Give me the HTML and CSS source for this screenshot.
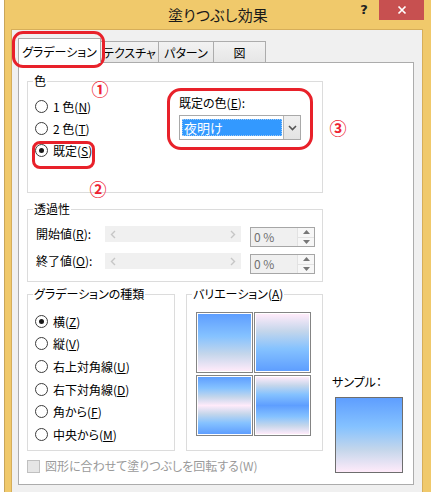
FILE: index.html
```html
<!DOCTYPE html>
<html lang="ja">
<head>
<meta charset="utf-8">
<title>塗りつぶし効果</title>
<link rel="stylesheet" href="styles.css">
</head>
<body>
<div class="window">
  <div class="titlebar">
    <div class="tb-side"></div>
    <div class="title">塗りつぶし効果</div>
    <div class="tb-side tb-buttons">
      <div class="help">?</div>
      <div class="close"><svg width="10" height="10" viewBox="0 0 10 10"><path d="M1.5 1.5L8.5 8.5M8.5 1.5L1.5 8.5" stroke="#fff" stroke-width="1.7"/></svg></div>
    </div>
  </div>
  <div class="client">
    <div class="tabs">
      <div class="tab active">グラデーション</div>
      <div class="tab t2">テクスチャ</div>
      <div class="tab t3">パターン</div>
      <div class="tab t4">図</div>
    </div>
    <div class="panel">
      <div class="grp grp-color">
        <div class="legend">色</div>
        <div class="color-body">
          <div class="radios">
            <div class="radio"><span class="rb"></span>1 色(<u>N</u>)</div>
            <div class="radio"><span class="rb"></span>2 色(<u>T</u>)</div>
            <div class="radio"><span class="rb on"></span>既定(<u>S</u>)</div>
          </div>
          <div class="preset">
            <div class="preset-label">既定の色(<u>E</u>):</div>
            <div class="combo">
              <div class="combo-val">夜明け</div>
              <div class="combo-btn"><svg width="9" height="6" viewBox="0 0 9 6"><path d="M1 1L4.5 4.5L8 1" fill="none" stroke="#555" stroke-width="1.6"/></svg></div>
            </div>
          </div>
        </div>
      </div>

      <div class="grp grp-trans">
        <div class="legend">透過性</div>
        <div class="trows">
          <div class="trow">
            <div class="tlabel">開始値(<u>R</u>):</div>
            <div class="slider">
              <svg width="6" height="9" viewBox="0 0 6 9"><path d="M5 1L1.5 4.5L5 8" fill="none" stroke="#c6c6c6" stroke-width="1.4"/></svg>
              <svg width="6" height="9" viewBox="0 0 6 9"><path d="M1 1L4.5 4.5L1 8" fill="none" stroke="#c6c6c6" stroke-width="1.4"/></svg>
            </div>
            <div class="spin">
              <div class="spin-val">0 %</div>
              <div class="spin-btns">
                <span><svg width="7" height="4" viewBox="0 0 7 4"><path d="M0 4L3.5 0L7 4Z" fill="#777"/></svg></span>
                <span><svg width="7" height="4" viewBox="0 0 7 4"><path d="M0 0L3.5 4L7 0Z" fill="#777"/></svg></span>
              </div>
            </div>
          </div>
          <div class="trow">
            <div class="tlabel">終了値(<u>O</u>):</div>
            <div class="slider">
              <svg width="6" height="9" viewBox="0 0 6 9"><path d="M5 1L1.5 4.5L5 8" fill="none" stroke="#c6c6c6" stroke-width="1.4"/></svg>
              <svg width="6" height="9" viewBox="0 0 6 9"><path d="M1 1L4.5 4.5L1 8" fill="none" stroke="#c6c6c6" stroke-width="1.4"/></svg>
            </div>
            <div class="spin">
              <div class="spin-val">0 %</div>
              <div class="spin-btns">
                <span><svg width="7" height="4" viewBox="0 0 7 4"><path d="M0 4L3.5 0L7 4Z" fill="#777"/></svg></span>
                <span><svg width="7" height="4" viewBox="0 0 7 4"><path d="M0 0L3.5 4L7 0Z" fill="#777"/></svg></span>
              </div>
            </div>
          </div>
        </div>
      </div>

      <div class="lower">
        <div class="grp grp-type">
          <div class="legend">グラデーションの種類</div>
          <div class="type-list">
            <div class="radio r2"><span class="rb on"></span>横(<u>Z</u>)</div>
            <div class="radio r2"><span class="rb"></span>縦(<u>V</u>)</div>
            <div class="radio r2"><span class="rb"></span>右上対角線(<u>U</u>)</div>
            <div class="radio r2"><span class="rb"></span>右下対角線(<u>D</u>)</div>
            <div class="radio r2"><span class="rb"></span>角から(<u>F</u>)</div>
            <div class="radio r2"><span class="rb"></span>中央から(<u>M</u>)</div>
          </div>
        </div>
        <div class="grp grp-var">
          <div class="legend">バリエーション(<u>A</u>)</div>
          <div class="swatches">
            <div class="sw"><div class="g g1"></div></div>
            <div class="sw"><div class="g g2"></div></div>
            <div class="sw"><div class="g g3"></div></div>
            <div class="sw"><div class="g g4"></div></div>
          </div>
        </div>
        <div class="sample">
          <div class="sample-label">サンプル：</div>
          <div class="sample-box g1"></div>
        </div>
        <div class="rotate">
          <span class="cb"></span>
          <span class="rotate-text">図形に合わせて塗りつぶしを回転する(W)</span>
        </div>
      </div>
    </div>
  </div>
</div>

<div class="mark m-tab"></div>
<div class="mark m-preset"></div>
<div class="mark m-combo"></div>
<div class="num n1">①</div>
<div class="num n2">②</div>
<div class="num n3">③</div>
</body>
</html>
```

FILE: styles.css
```css
html, body {
  margin: 0;
  padding: 0;
}
body {
  position: relative;
  width: 431px;
  height: 492px;
  overflow: hidden;
  background: #ffffff;
  font-family: "Noto Sans CJK JP", "Noto Sans", sans-serif;
  font-size: 12px;
  font-feature-settings: "palt";
  color: #000;
}
u {
  text-decoration: underline;
  text-underline-offset: 1px;
  text-decoration-thickness: 1px;
}

.window {
  margin-left: 4px;
  width: 427px;
  height: 492px;
  box-sizing: border-box;
  background: #f0c96b;
  border-left: 1px solid #c9a65a;
}

/* title bar */
.titlebar {
  height: 29px;
  display: grid;
  grid-template-columns: 1fr auto 1fr;
}
.title {
  font-size: 15px;
  line-height: 29px;
  color: #1a1a1a;
  letter-spacing: 0.2px;
}
.tb-buttons {
  display: flex;
  justify-content: flex-end;
  align-items: flex-start;
  padding-right: 7px;
}
.help {
  width: 20px;
  height: 20px;
  margin-right: 5px;
  font-family: "DejaVu Sans", sans-serif;
  font-weight: bold;
  font-size: 13px;
  line-height: 20px;
  text-align: center;
  color: #222;
}
.close {
  width: 45px;
  height: 20px;
  background: #c75050;
  display: grid;
  place-items: center;
}

/* client */
.client {
  margin-left: 6px;
  width: 412px;
  height: 463px;
  box-sizing: border-box;
  background: #f0f0f0;
  border: 1px solid #d6ae5a;
  border-bottom: none;
  padding: 8px 0 0 6px;
}

.tabs {
  display: flex;
  align-items: flex-end;
}
.tab {
  box-sizing: border-box;
  height: 21px;
  border: 1px solid #acacac;
  border-bottom: none;
  background: linear-gradient(#f2f2f2, #e6e6e6);
  display: flex;
  justify-content: center;
  align-items: center;
  margin-left: -1px;
  padding-top: 1px;
}
.tab.active {
  position: relative;
  z-index: 1;
  height: 25px;
  width: 83px;
  margin-left: 0;
  margin-bottom: -1px;
  background: #fff;
  padding-top: 0;
}
.t2 { width: 59px; }
.t3 { width: 56px; }
.t4 { width: 53px; }

.panel {
  width: 396px;
  height: 423px;
  box-sizing: border-box;
  background: #fff;
  border: 1px solid #acacac;
  padding-left: 8px;
}

/* group boxes */
.grp {
  box-sizing: border-box;
  border: 1px solid #dcdcdc;
}
.legend {
  width: fit-content;
  margin: -8px 0 0 5px;
  padding: 0 1px;
  line-height: 14px;
  background: #fff;
}

.grp-color {
  margin-top: 18px;
  width: 296px;
  height: 112px;
}
.color-body {
  display: flex;
}
.radios {
  width: 151px;
  box-sizing: border-box;
  padding: 7px 0 0 7px;
}
.radio {
  display: flex;
  align-items: center;
  height: 22px;
  white-space: nowrap;
}
.rb {
  flex: none;
  width: 13px;
  height: 13px;
  box-sizing: border-box;
  border: 1px solid #3c3c3c;
  border-radius: 50%;
  background: #fff;
  margin-right: 5px;
  display: grid;
  place-items: center;
}
.rb.on::after {
  content: "";
  width: 5px;
  height: 5px;
  border-radius: 50%;
  background: #1a1a1a;
}

.preset {
  padding-top: 8px;
}
.preset-label {
  line-height: 14px;
}
.combo {
  margin-top: 5px;
  width: 122px;
  height: 25px;
  box-sizing: border-box;
  border: 1px solid #a9a9a9;
  background: #fff;
  display: flex;
}
.combo-val {
  flex: 1;
  margin: 3px 1px 3px 2px;
  background: #3399ff;
  color: #fff;
  font-size: 13px;
  line-height: 17px;
  padding-left: 2px;
  outline: 1px dotted #a0c8f0;
  outline-offset: -1px;
}
.combo-btn {
  width: 16px;
  background: linear-gradient(#f0f0f0, #e3e3e3);
  border-left: 1px solid #b5b5b5;
  display: grid;
  place-items: center;
}

/* transparency */
.grp-trans {
  margin-top: 16px;
  width: 296px;
  height: 73px;
}
.trows {
  padding: 10px 0 0 8px;
  display: flex;
  flex-direction: column;
  gap: 6px;
}
.trow {
  display: flex;
  align-items: flex-start;
  height: 21px;
}
.tlabel {
  width: 69px;
  line-height: 16px;
  white-space: nowrap;
}
.slider {
  width: 136px;
  height: 16px;
  box-sizing: border-box;
  background: #f0f0f0;
  display: flex;
  justify-content: space-between;
  align-items: center;
  padding: 0 5px 0 5px;
}
.spin {
  margin-left: 9px;
  margin-top: 1px;
  width: 65px;
  height: 20px;
  box-sizing: border-box;
  border: 1px solid #a6a6a6;
  background: #f0f0f0;
  display: flex;
}
.spin-val {
  flex: 1;
  color: #707070;
  padding-left: 3px;
  line-height: 18px;
  font-size: 12px;
}
.spin-btns {
  width: 16px;
  display: flex;
  flex-direction: column;
  background: #f7f7f7;
  border-left: 1px solid #e2e2e2;
}
.spin-btns span {
  flex: 1;
  display: grid;
  place-items: center;
}
.spin-btns span + span {
  border-top: 1px solid #e2e2e2;
}

/* lower */
.lower {
  margin-top: 12px;
  display: grid;
  grid-template-columns: 148px 137px auto;
  grid-template-rows: 157px auto;
  align-items: start;
}
.grp-type {
  grid-column: 1;
  grid-row: 1;
  height: 157px;
}
.type-list {
  padding: 9px 0 0 7px;
}
.radio.r2 {
  height: 22.6px;
}
.grp-var {
  grid-column: 2;
  grid-row: 1;
  margin-left: 11px;
  width: 137px;
  height: 157px;
}
.swatches {
  padding: 11px 0 0 9px;
  display: grid;
  grid-template-columns: 57px 57px;
  grid-auto-rows: 61px;
  column-gap: 1px;
  row-gap: 2px;
}
.sw {
  box-sizing: border-box;
  border: 1px solid #848484;
  padding: 1px;
  background: #fff;
}
.g {
  width: 100%;
  height: 100%;
}
.g1 {
  background: linear-gradient(to bottom, #5e9eff 0%, #85c2ff 39%, #c4d6eb 70%, #ffebfa 100%);
}
.g2 {
  background: linear-gradient(to top, #5e9eff 0%, #85c2ff 39%, #c4d6eb 70%, #ffebfa 100%);
}
.g3 {
  background: linear-gradient(to bottom, #5e9eff 0%, #85c2ff 19.5%, #c4d6eb 35%, #ffebfa 50%, #c4d6eb 65%, #85c2ff 80.5%, #5e9eff 100%);
}
.g4 {
  background: linear-gradient(to bottom, #ffebfa 0%, #c4d6eb 15%, #85c2ff 30.5%, #5e9eff 50%, #85c2ff 69.5%, #c4d6eb 85%, #ffebfa 100%);
}
.sample {
  grid-column: 3;
  grid-row: 1 / 3;
  margin-left: 20px;
  padding-top: 81px;
}
.sample-label {
  line-height: 14px;
  white-space: nowrap;
}
.sample-box {
  margin: 8px 0 0 3px;
  width: 68px;
  height: 76px;
  box-sizing: border-box;
  border: 1px solid #6e6e6e;
}

.rotate {
  grid-column: 1 / 3;
  grid-row: 2;
  margin-top: 8px;
  display: flex;
  align-items: center;
  height: 14px;
}
.cb {
  width: 13px;
  height: 13px;
  box-sizing: border-box;
  border: 1px solid #c0c0c0;
  background: #e6e6e6;
  margin-right: 5px;
}
.rotate-text {
  color: #9a9a9a;
  line-height: 14px;
  white-space: nowrap;
}

/* annotations */
.mark {
  position: absolute;
  box-sizing: border-box;
  border: 3px solid #e8212a;
}
.m-tab {
  left: 12px;
  top: 31px;
  width: 93px;
  height: 37px;
  border-radius: 11px;
}
.m-preset {
  left: 32px;
  top: 141px;
  width: 63px;
  height: 28px;
  border-radius: 8px;
}
.m-combo {
  left: 167px;
  top: 88px;
  width: 146px;
  height: 62px;
  border-radius: 14px;
}
.num {
  position: absolute;
  color: #ee2233;
  font-size: 17px;
  line-height: 18px;
  font-weight: bold;
  font-feature-settings: normal;
  width: 18px;
  text-align: center;
}
.n1 { left: 91px; top: 80px; }
.n2 { left: 89px; top: 180px; }
.n3 { left: 329px; top: 119px; }
```
